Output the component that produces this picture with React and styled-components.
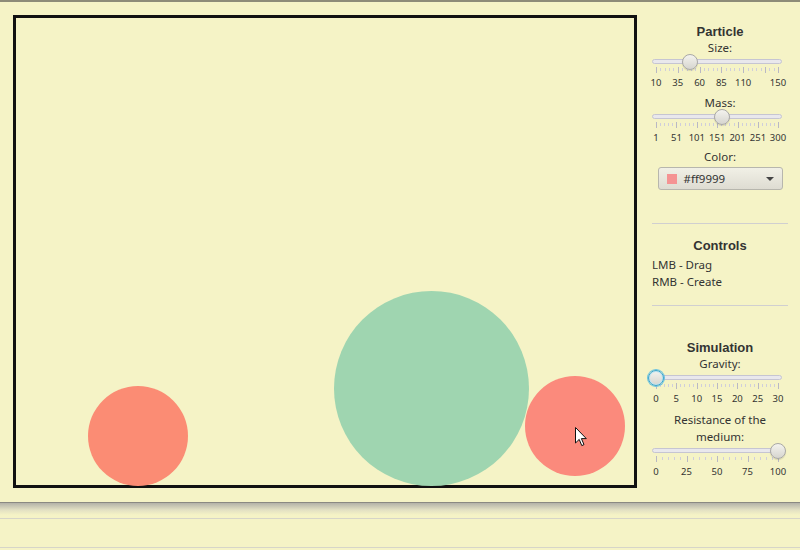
import React from 'react';
import styled, { createGlobalStyle } from 'styled-components';

const Global = createGlobalStyle`
  html, body { margin: 0; padding: 0; background: #f5f3c6; }
  body { font-family: "Noto Sans", "Open Sans", sans-serif; color: #333; }
`;

const Page = styled.div`
  width: 800px;
  height: 550px;
  display: flex;
  flex-direction: column;
  overflow: hidden;
  background: #f5f3c6;
`;

const Window = styled.div`
  height: 502px;
  box-sizing: border-box;
  border-top: 2px solid #8d8b78;
  display: flex;
`;

const CanvasArea = styled.div`
  width: 640px;
  box-sizing: border-box;
  padding: 13px 0 0 13px;
`;

const Canvas = styled.div`
  position: relative;
  width: 624px;
  height: 473px;
  box-sizing: border-box;
  border: 3px solid #111;
`;

const Ball = styled.div`
  position: absolute;
  border-radius: 50%;
  background: ${p => p.$color};
`;

const Cursor = styled.svg`
  position: absolute;
  overflow: visible;
`;

const Sidebar = styled.div`
  width: 160px;
  box-sizing: border-box;
  padding: 22px 12px 0 12px;
  display: flex;
  flex-direction: column;
`;

const Title = styled.div`
  font-family: "Liberation Sans", Arial, sans-serif;
  font-weight: bold;
  font-size: 13px;
  line-height: 16px;
  text-align: center;
  color: #333;
  margin-top: ${p => p.$mt || 0}px;
`;

const FieldLabel = styled.div`
  font-size: 11.5px;
  line-height: ${p => (p.$lh || 16)}px;
  text-align: center;
  color: #333;
  margin-top: ${p => p.$mt || 0}px;
`;

const SliderBox = styled.div`
  width: 130px;
  display: flex;
  flex-direction: column;
`;

const TrackRow = styled.div`
  position: relative;
  height: 12px;
`;

const Track = styled.div`
  position: absolute;
  left: 0;
  right: 0;
  top: 3px;
  height: 5px;
  box-sizing: border-box;
  border: 1px solid #c6c5d2;
  background: #e9e8ec;
  border-radius: 3px;
`;

const Thumb = styled.div`
  position: absolute;
  top: -2px;
  width: 16px;
  height: 16px;
  box-sizing: border-box;
  border-radius: 50%;
  border: 1px solid ${p => (p.$focused ? '#3aa6cf' : '#a9a8a6')};
  background: linear-gradient(#f4f3ee, #d6d5cf);
  box-shadow: ${p => (p.$focused ? '0 0 0 1px #6cc3e0, inset 0 0 0 1px #bfe3ef' : '0 1px 1px rgba(0,0,0,0.12)')};
`;

const Ticks = styled.svg`
  display: block;
  margin-top: -1px;
`;

const TickLabels = styled.div`
  position: relative;
  height: 12px;
  margin-top: 4px;
`;

const TickLabel = styled.span`
  position: absolute;
  top: 0;
  transform: translateX(-50%);
  font-size: 9.5px;
  line-height: 12px;
  color: #333;
  white-space: nowrap;
`;

const Combo = styled.div`
  align-self: center;
  width: 125px;
  height: 23px;
  margin-top: 2px;
  box-sizing: border-box;
  border: 1px solid #b7b6ad;
  border-radius: 3px;
  background: linear-gradient(#f1f0e6, #dedcd2);
  display: flex;
  align-items: center;
  padding-left: 8px;
  gap: 7px;
  font-size: 11.5px;
  color: #333;
`;

const Swatch = styled.span`
  width: 10px;
  height: 10px;
  background: ${p => p.$color};
`;

const Arrow = styled.span`
  margin-left: auto;
  margin-right: 8px;
  width: 0;
  height: 0;
  border-left: 4px solid transparent;
  border-right: 4px solid transparent;
  border-top: 4px solid #444;
`;

const Separator = styled.div`
  height: 1px;
  background: #d0cfd0;
  margin-top: ${p => p.$mt}px;
`;

const HelpLine = styled.div`
  font-size: 11.5px;
  line-height: 17px;
  color: #333;
  margin-top: ${p => p.$mt || 0}px;
`;

const Footer = styled.div`
  flex: 1;
  border-top: 1px solid #8a8982;
  background: linear-gradient(#b3b2a8 0, #e3e1c3 7px, #f5f3c6 12px) no-repeat;
  background-size: 100% 12px;
  background-color: #f5f3c6;
  display: flex;
  flex-direction: column;
`;

const FooterRule = styled.div`
  height: 1px;
  background: #d6d5c8;
  margin-top: ${p => p.$mt}px;
`;

const W = 130;
const INSET = 4;
const posOf = (v, min, max) => INSET + ((v - min) / (max - min)) * (W - 2 * INSET);

function Slider({ label, labelLines, min, max, value, unit, labels, minor = 4, focused, mt }) {
  const ticks = [];
  for (let v = min; v <= max + 1e-9; v += unit) {
    ticks.push({ x: posOf(v, min, max), major: true });
    for (let k = 1; k <= minor; k++) {
      const mv = v + (unit * k) / (minor + 1);
      if (mv < max) ticks.push({ x: posOf(mv, min, max), major: false });
    }
  }
  ticks.push({ x: posOf(max, min, max), major: true });
  const tx = posOf(value, min, max);
  return (
    <>
      <FieldLabel $mt={mt} $lh={labelLines ? 17 : 16}>
        {labelLines ? labelLines.map((l, i) => <div key={i}>{l}</div>) : label}
      </FieldLabel>
      <SliderBox>
        <TrackRow>
          <Track />
          <Thumb $focused={focused} style={{ left: `${tx - 8}px` }} />
        </TrackRow>
        <Ticks width={W} height={6}>
          {ticks.map((t, i) => (
            <line
              key={i}
              x1={Math.round(t.x) + 0.5}
              x2={Math.round(t.x) + 0.5}
              y1={t.major ? 0 : 1}
              y2={t.major ? 6 : 4}
              stroke={t.major ? '#b9b8c4' : '#cfcedb'}
              strokeWidth="1"
            />
          ))}
        </Ticks>
        <TickLabels>
          {labels.map(v => (
            <TickLabel key={v} style={{ left: `${posOf(v, min, max)}px` }}>{v}</TickLabel>
          ))}
        </TickLabels>
      </SliderBox>
    </>
  );
}

export default function App() {
  return (
    <Page>
      <Global />
      <Window>
        <CanvasArea>
          <Canvas>
            <Ball $color="#fb8c74" style={{ left: 72, top: 368, width: 100, height: 100 }} />
            <Ball $color="#9fd5b0" style={{ left: 318, top: 273, width: 195, height: 195 }} />
            <Ball $color="#fb8a7c" style={{ left: 509, top: 358, width: 100, height: 100 }} />
            <Cursor width="12" height="20" viewBox="0 0 12 20" style={{ left: 559, top: 409 }}>
              <path d="M0.5 0.5 L0.5 16 L4.2 12.4 L6.8 18.6 L9 17.6 L6.4 11.6 L11.3 11.6 Z" fill="#fff" stroke="#111" strokeWidth="1" strokeLinejoin="round" />
            </Cursor>
          </Canvas>
        </CanvasArea>
        <Sidebar>
          <Title>Particle</Title>
          <Slider label="Size:" min={10} max={150} value={49} unit={25} labels={[10, 35, 60, 85, 110, 150]} />
          <Slider label="Mass:" mt={6} min={1} max={300} value={163} unit={50} labels={[1, 51, 101, 151, 201, 251, 300]} />
          <FieldLabel $mt={5}>Color:</FieldLabel>
          <Combo>
            <Swatch $color="#f59393" />
            <span>#ff9999</span>
            <Arrow />
          </Combo>
          <Separator $mt={33} />
          <Title $mt={14}>Controls</Title>
          <HelpLine $mt={2}>LMB - Drag</HelpLine>
          <HelpLine>RMB - Create</HelpLine>
          <Separator $mt={15} />
          <Title $mt={34}>Simulation</Title>
          <Slider label="Gravity:" min={0} max={30} value={0} unit={5} labels={[0, 5, 10, 15, 20, 25, 30]} focused />
          <Slider labelLines={['Resistance of the', 'medium:']} mt={6} min={0} max={100} value={100} unit={25} labels={[0, 25, 50, 75, 100]} />
        </Sidebar>
      </Window>
      <Footer>
        <FooterRule $mt={15} />
        <FooterRule $mt={28} />
      </Footer>
    </Page>
  );
}
